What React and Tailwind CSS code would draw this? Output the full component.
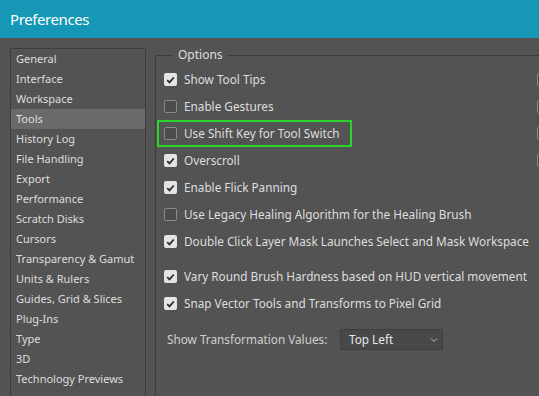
import React from "react";

const cats = [
  "General","Interface","Workspace","Tools","History Log","File Handling","Export","Performance","Scratch Disks","Cursors","Transparency & Gamut","Units & Rulers","Guides, Grid & Slices","Plug-Ins","Type","3D","Technology Previews",
];

function Box({ checked }) {
  return checked ? (
    <span className="flex h-[13px] w-[13px] shrink-0 items-center justify-center rounded-[2px] bg-[#e4e4e4]">
      <svg width="9" height="8" viewBox="0 0 9 8"><path d="M1.2 4.2 L3.5 6.4 L7.8 1.5" fill="none" stroke="#2e2e2e" strokeWidth="1.8" /></svg>
    </span>
  ) : (
    <span className="block h-[13px] w-[13px] shrink-0 rounded-[2px] border border-[#8a8a8a] bg-[#4b4b4b]" />
  );
}

function Row({ checked, label, highlight }) {
  if (highlight) {
    return (
      <div className="box-border flex h-[27px] w-[195px] items-center gap-[7px] whitespace-nowrap border-2 border-[#2ad52a] pl-[5px]">
        <Box checked={checked} />
        <span>{label}</span>
      </div>
    );
  }
  return (
    <div className="flex h-[27px] items-center gap-[7px] pl-[7px] whitespace-nowrap">
      <Box checked={checked} />
      <span>{label}</span>
    </div>
  );
}

export default function App() {
  return (
    <div className="relative h-[396px] w-[539px] overflow-hidden bg-[#535353] text-[11.75px] text-[#dedede]" style={{ fontFamily: '"Noto Sans", "Open Sans", sans-serif' }}>
      <div className="flex h-[38px] items-center bg-[#1597b5] pl-[10px] pt-[1px] text-[15px] tracking-[-0.4px] text-white">Preferences</div>
      <div className="flex">
        <div className="ml-[10px] mt-[10px] h-[400px] w-[136px] shrink-0 border border-[#3d3d3d] bg-[#535353] text-[11px]">
          {cats.map((c, i) => (
            <div key={c} className={`flex h-[20px] items-center whitespace-nowrap pl-[5px] ${i === 3 ? "bg-[#6a6a6a]" : ""}`}>{c}</div>
          ))}
        </div>
        <fieldset className="ml-[9px] mt-[9px] w-[420px] shrink-0 border border-[#3b3b3b] pb-[7px] pl-[1px]">
          <legend className="ml-[16px] px-[5px] text-[12px] leading-[16px]">Options</legend>
          <div className="flex pt-[3px]">
            <div className="w-[380px] shrink-0">
              <Row checked label="Show Tool Tips" />
              <Row label="Enable Gestures" />
              <Row highlight label="Use Shift Key for Tool Switch" />
              <Row checked label="Overscroll" />
              <Row checked label="Enable Flick Panning" />
              <Row label="Use Legacy Healing Algorithm for the Healing Brush" />
              <Row checked label="Double Click Layer Mask Launches Select and Mask Workspace" />
            </div>
            <div className="flex flex-col">
              {[0, 1, 2, 3].map((i) => (
                <div key={i} className="flex h-[27px] items-center"><Box checked={false} /></div>
              ))}
            </div>
          </div>
          <div className="mt-[8px]">
            <Row checked label="Vary Round Brush Hardness based on HUD vertical movement" />
            <Row checked label="Snap Vector Tools and Transforms to Pixel Grid" />
          </div>
          <div className="mt-[12px] flex h-[21px] items-center pl-[10px]">
            <span className="w-[173px] text-[#d0d0d0]">Show Transformation Values:</span>
            <div className="flex h-[21px] w-[103px] items-center justify-between rounded-[2px] border border-[#3e3e3e] bg-[#484848] pl-[8px] pr-[4px] text-[#e8e8e8]">
              <span>Top Left</span>
              <svg width="8" height="6" viewBox="0 0 8 6"><path d="M1 1.5 L4 4.5 L7 1.5" fill="none" stroke="#bdbdbd" strokeWidth="1" /></svg>
            </div>
          </div>
        </fieldset>
      </div>
    </div>
  );
}
